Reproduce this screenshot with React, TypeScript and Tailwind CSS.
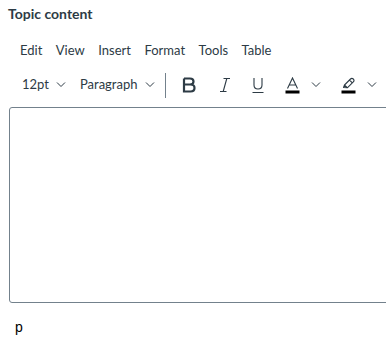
import React from "react";

const Chevron = () => (
  <svg width="10" height="6" viewBox="0 0 10 6" fill="none" stroke="#2d3b45" strokeWidth="1">
    <path d="M1 0.5 L5 4.5 L9 0.5" />
  </svg>
);

const App = () => {
  const menu = ["Edit", "View", "Insert", "Format", "Tools", "Table"];

  return (
    <div className="w-[386px] h-[349px] overflow-hidden bg-white text-[#2d3b45]" style={{ fontFamily: "Lato, sans-serif" }}>
      <div className="pl-2 pt-[4px] text-[14px] font-bold leading-[20px]">Topic content</div>

      {/* menubar */}
      <div className="flex items-center h-[24px] mt-[15px] pl-[20px] gap-[13.5px] text-[13px]">
        {menu.map((m) => (
          <span key={m}>{m}</span>
        ))}
      </div>

      {/* toolbar */}
      <div className="flex items-center h-[28px] mt-[8px] pl-[22px] text-[13px] whitespace-nowrap">
        <span className="flex items-center gap-[7px]">
          12pt <Chevron />
        </span>
        <span className="flex items-center gap-[7px] ml-[14px]">
          Paragraph <Chevron />
        </span>
        <span className="ml-[10px] w-px h-[25px] bg-[#73818c]" />
        <span className="ml-[15px] w-[16px] flex justify-center">
          <svg width="14" height="16" viewBox="0 0 14 16" fill="none" stroke="#2d3b45" strokeWidth="2.2">
            <path d="M2 1.5 H8 C10.5 1.5 11.5 2.8 11.5 4.5 C11.5 6.2 10.2 7.5 8 7.5 H2 V14.5 H8.5 C11 14.5 12.5 13.2 12.5 11 C12.5 8.8 11 7.5 8.5 7.5 M2 1.5 V14.5" />
          </svg>
        </span>
        <span className="ml-[21px] w-[14px] flex justify-center">
          <svg width="12" height="16" viewBox="0 0 12 16" fill="none" stroke="#2d3b45" strokeWidth="1.1">
            <path d="M4.5 1.5 H11 M1 14.5 H7.5 M7.8 1.5 L4.2 14.5" />
          </svg>
        </span>
        <span className="ml-[19px] w-[14px] flex justify-center">
          <svg width="12" height="17" viewBox="0 0 12 17" fill="none" stroke="#2d3b45" strokeWidth="1.1">
            <path d="M2 1 V8 C2 10.5 3.5 12 6 12 C8.5 12 10 10.5 10 8 V1 M0.5 15.5 H11.5" />
          </svg>
        </span>
        <span className="ml-[20px] flex items-center gap-[11px]">
          <svg width="15" height="17" viewBox="0 0 15 17" fill="none">
            <path d="M2.5 11.5 L7.5 1 L12.5 11.5 M4.2 8 H10.8" stroke="#2d3b45" strokeWidth="1.1" />
            <rect x="0.5" y="13.5" width="14" height="3" fill="#000" />
          </svg>
          <Chevron />
        </span>
        <span className="ml-[20px] flex items-center gap-[11px]">
          <svg width="15" height="17" viewBox="0 0 15 17" fill="none">
            <path d="M2.5 10.5 L3.5 8 L9.5 2 C10.3 1.2 11.5 1.2 12.3 2 C13.1 2.8 13.1 4 12.3 4.8 L6.3 10.8 Z M3.5 8 L6 10.5 M8.5 3 L11.3 5.8" stroke="#2d3b45" strokeWidth="1.1" strokeLinejoin="round" />
            <rect x="0.5" y="13.5" width="14" height="3" fill="#000" />
          </svg>
          <Chevron />
        </span>
      </div>

      {/* edit area */}
      <div className="ml-[9px] mt-[8px] w-[400px] h-[196px] border border-[#73818c] rounded-[3px]" />

      <div className="pl-[15px] mt-[14px] text-[14px] text-black" style={{ fontFamily: "'Liberation Sans', Arial, sans-serif" }}>
        p
      </div>
    </div>
  );
};

export default App;
